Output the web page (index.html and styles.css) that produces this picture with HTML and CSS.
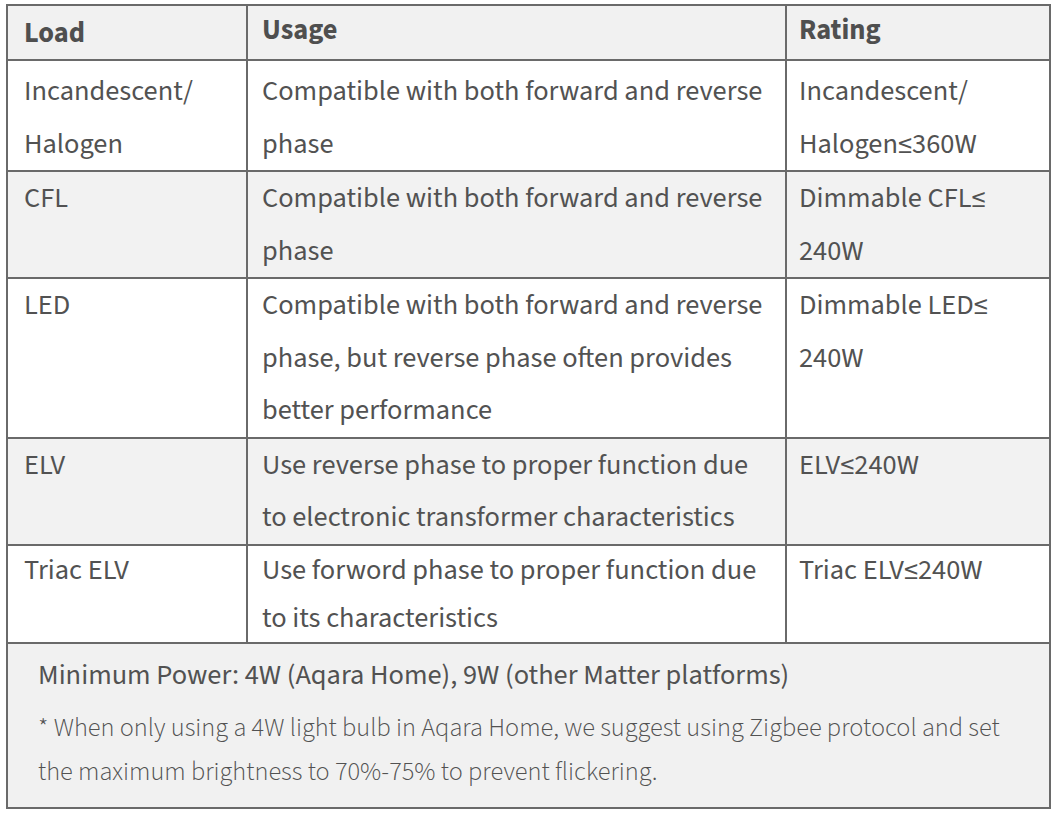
FILE: index.html
```html
<!DOCTYPE html>
<html lang="en">
<head>
<meta charset="utf-8">
<title>Load compatibility</title>
<link rel="stylesheet" href="styles.css">
</head>
<body>
<table class="spec">
  <colgroup>
    <col class="c-load">
    <col class="c-usage">
    <col class="c-rating">
  </colgroup>
  <thead>
    <tr class="head">
      <th class="h-load">Load</th>
      <th>Usage</th>
      <th class="rate">Rating</th>
    </tr>
  </thead>
  <tbody>
    <tr class="row first">
      <td>Incandescent/<br>Halogen</td>
      <td>Compatible with both forward and reverse phase</td>
      <td class="rate">Incandescent/<br>Halogen≤360W</td>
    </tr>
    <tr class="row alt">
      <td>CFL</td>
      <td>Compatible with both forward and reverse phase</td>
      <td class="rate">Dimmable CFL≤<br>240W</td>
    </tr>
    <tr class="row">
      <td>LED</td>
      <td>Compatible with both forward and reverse phase, but reverse phase often provides better performance</td>
      <td class="rate">Dimmable LED≤<br>240W</td>
    </tr>
    <tr class="row alt">
      <td>ELV</td>
      <td>Use reverse phase to proper function due to electronic transformer characteristics</td>
      <td class="rate">ELV≤240W</td>
    </tr>
    <tr class="row last">
      <td>Triac ELV</td>
      <td>Use forword phase to proper function due to its characteristics</td>
      <td class="rate">Triac ELV≤240W</td>
    </tr>
    <tr class="foot">
      <td colspan="3">
        <p class="min">Minimum Power: 4W (Aqara Home), 9W (other Matter platforms)</p>
        <p class="note">* When only using a 4W light bulb in Aqara Home, we suggest using Zigbee protocol and set the maximum brightness to 70%-75% to prevent flickering.</p>
      </td>
    </tr>
  </tbody>
</table>
</body>
</html>
```
FILE: styles.css
```css
html, body {
  margin: 0;
  padding: 0;
  background: #ffffff;
}

body {
  font-family: "Source Sans 3", "Lato", "Liberation Sans", sans-serif;
  color: #525252;
}

.spec {
  border-collapse: collapse;
  table-layout: fixed;
  width: 1043px;
  margin: 4px 0 0 6px;
  border: 2px solid #6a6a6a;
  font-size: 28.4px;
}

.c-load { width: 240px; }
.c-usage { width: 539px; }
.c-rating { width: 264px; }

.spec th,
.spec td {
  border: 2px solid #6a6a6a;
  text-align: left;
  vertical-align: top;
  padding: 0 14px 0 16px;
  line-height: 52.5px;
}

.spec td + td,
.spec th + th {
  padding-left: 14px;
}

.spec .rate {
  padding-left: 12px;
}

.head th {
  background: #f1f1f1;
  font-weight: 700;
  color: #4f4f4f;
  line-height: 48px;
  padding-top: 0;
  padding-bottom: 5px;
}

.head .h-load {
  line-height: 51px;
  padding-top: 2px;
  padding-bottom: 0;
}

.row td {
  background: #ffffff;
}

.row.first td {
  padding-top: 4px;
}

.row.alt td {
  background: #f2f2f2;
}

.row.last td {
  line-height: 48px;
}

.foot td {
  background: #f1f1f1;
  padding: 5px 30px 13px 30px;
}

.min {
  margin: 0;
  line-height: 52px;
}

.note {
  margin: 5px 0 0;
  font-size: 26.3px;
  font-weight: 300;
  line-height: 44px;
}
```
